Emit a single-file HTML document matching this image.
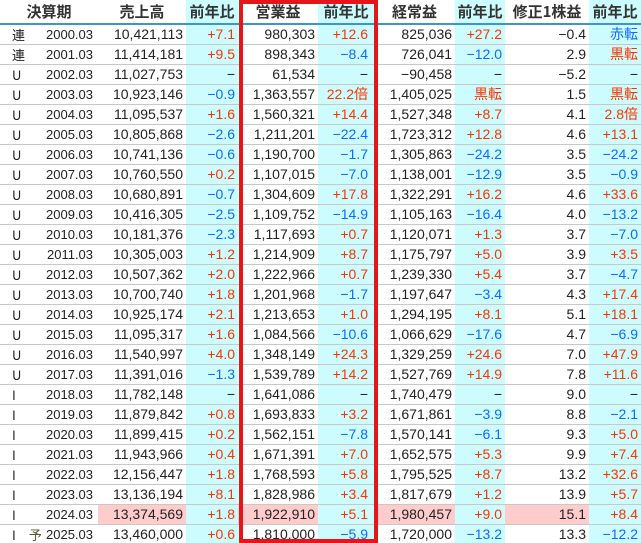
<!DOCTYPE html>
<html><head><meta charset="utf-8">
<style>
html,body{margin:0;padding:0;background:#fff;width:641px;height:543px;overflow:hidden;position:relative}
table{border-collapse:collapse;table-layout:fixed;width:641px;font-family:"Liberation Sans","Noto Sans CJK JP",sans-serif;font-size:14px;color:#222}
th{height:23px;border-bottom:2px solid #3c94d0;font-weight:bold;font-size:15px;color:#333;text-align:center;padding:0;font-family:"Noto Sans CJK JP","Liberation Sans",sans-serif}
td{height:19px;border-bottom:1px solid #c8c8c8;padding:0 3px 0 0;text-align:right;white-space:nowrap;line-height:19px}
td:nth-child(1){text-align:left;padding-left:12px;font-size:13px;font-family:"Noto Sans CJK JP",sans-serif}
td:nth-child(2){font-size:13px;padding-right:5px}
td:nth-child(4),td:nth-child(6),td:nth-child(8),td:nth-child(10),th.c{background:#ccfcfd}
td:nth-child(6){padding-right:6px}
.r{color:#ff3300}.b{color:#0a6cff}
.r,.b,.k{font-family:"Liberation Sans","Noto Sans CJK JP",sans-serif}
tr.h td.p{background:#ffcccc}
.box{position:absolute;left:239px;top:0;width:131px;height:535px;border:4px solid #e8141c}
.y{color:#553;margin-left:13px}
</style></head><body>
<table>
<colgroup><col style="width:40px"><col style="width:58px"><col style="width:88px"><col style="width:52px"><col style="width:80px"><col style="width:56px"><col style="width:81px"><col style="width:50px"><col style="width:84px"><col style="width:52px"></colgroup>
<tr><th colspan="2">決算期</th><th>売上高</th><th class="c">前年比</th><th>営業益</th><th class="c">前年比</th><th>経常益</th><th class="c">前年比</th><th>修正1株益</th><th class="c">前年比</th></tr>
<tr><td>連</td><td>2000.03</td><td>10,421,113</td><td class="r">+7.1</td><td>980,303</td><td class="r">+12.6</td><td>825,036</td><td class="r">+27.2</td><td>−0.4</td><td class="b">赤転</td></tr>
<tr><td>連</td><td>2001.03</td><td>11,414,181</td><td class="r">+9.5</td><td>898,343</td><td class="b">−8.4</td><td>726,041</td><td class="b">−12.0</td><td>2.9</td><td class="r">黒転</td></tr>
<tr><td>U</td><td>2002.03</td><td>11,027,753</td><td>−</td><td>61,534</td><td>−</td><td>−90,458</td><td>−</td><td>−5.2</td><td>−</td></tr>
<tr><td>U</td><td>2003.03</td><td>10,923,146</td><td class="b">−0.9</td><td>1,363,557</td><td class="r">22.2倍</td><td>1,405,025</td><td class="r">黒転</td><td>1.5</td><td class="r">黒転</td></tr>
<tr><td>U</td><td>2004.03</td><td>11,095,537</td><td class="r">+1.6</td><td>1,560,321</td><td class="r">+14.4</td><td>1,527,348</td><td class="r">+8.7</td><td>4.1</td><td class="r">2.8倍</td></tr>
<tr><td>U</td><td>2005.03</td><td>10,805,868</td><td class="b">−2.6</td><td>1,211,201</td><td class="b">−22.4</td><td>1,723,312</td><td class="r">+12.8</td><td>4.6</td><td class="r">+13.1</td></tr>
<tr><td>U</td><td>2006.03</td><td>10,741,136</td><td class="b">−0.6</td><td>1,190,700</td><td class="b">−1.7</td><td>1,305,863</td><td class="b">−24.2</td><td>3.5</td><td class="b">−24.2</td></tr>
<tr><td>U</td><td>2007.03</td><td>10,760,550</td><td class="r">+0.2</td><td>1,107,015</td><td class="b">−7.0</td><td>1,138,001</td><td class="b">−12.9</td><td>3.5</td><td class="b">−0.9</td></tr>
<tr><td>U</td><td>2008.03</td><td>10,680,891</td><td class="b">−0.7</td><td>1,304,609</td><td class="r">+17.8</td><td>1,322,291</td><td class="r">+16.2</td><td>4.6</td><td class="r">+33.6</td></tr>
<tr><td>U</td><td>2009.03</td><td>10,416,305</td><td class="b">−2.5</td><td>1,109,752</td><td class="b">−14.9</td><td>1,105,163</td><td class="b">−16.4</td><td>4.0</td><td class="b">−13.2</td></tr>
<tr><td>U</td><td>2010.03</td><td>10,181,376</td><td class="b">−2.3</td><td>1,117,693</td><td class="r">+0.7</td><td>1,120,071</td><td class="r">+1.3</td><td>3.7</td><td class="b">−7.0</td></tr>
<tr><td>U</td><td>2011.03</td><td>10,305,003</td><td class="r">+1.2</td><td>1,214,909</td><td class="r">+8.7</td><td>1,175,797</td><td class="r">+5.0</td><td>3.9</td><td class="r">+3.5</td></tr>
<tr><td>U</td><td>2012.03</td><td>10,507,362</td><td class="r">+2.0</td><td>1,222,966</td><td class="r">+0.7</td><td>1,239,330</td><td class="r">+5.4</td><td>3.7</td><td class="b">−4.7</td></tr>
<tr><td>U</td><td>2013.03</td><td>10,700,740</td><td class="r">+1.8</td><td>1,201,968</td><td class="b">−1.7</td><td>1,197,647</td><td class="b">−3.4</td><td>4.3</td><td class="r">+17.4</td></tr>
<tr><td>U</td><td>2014.03</td><td>10,925,174</td><td class="r">+2.1</td><td>1,213,653</td><td class="r">+1.0</td><td>1,294,195</td><td class="r">+8.1</td><td>5.1</td><td class="r">+18.1</td></tr>
<tr><td>U</td><td>2015.03</td><td>11,095,317</td><td class="r">+1.6</td><td>1,084,566</td><td class="b">−10.6</td><td>1,066,629</td><td class="b">−17.6</td><td>4.7</td><td class="b">−6.9</td></tr>
<tr><td>U</td><td>2016.03</td><td>11,540,997</td><td class="r">+4.0</td><td>1,348,149</td><td class="r">+24.3</td><td>1,329,259</td><td class="r">+24.6</td><td>7.0</td><td class="r">+47.9</td></tr>
<tr><td>U</td><td>2017.03</td><td>11,391,016</td><td class="b">−1.3</td><td>1,539,789</td><td class="r">+14.2</td><td>1,527,769</td><td class="r">+14.9</td><td>7.8</td><td class="r">+11.6</td></tr>
<tr><td>I</td><td>2018.03</td><td>11,782,148</td><td>−</td><td>1,641,086</td><td>−</td><td>1,740,479</td><td>−</td><td>9.0</td><td>−</td></tr>
<tr><td>I</td><td>2019.03</td><td>11,879,842</td><td class="r">+0.8</td><td>1,693,833</td><td class="r">+3.2</td><td>1,671,861</td><td class="b">−3.9</td><td>8.8</td><td class="b">−2.1</td></tr>
<tr><td>I</td><td>2020.03</td><td>11,899,415</td><td class="r">+0.2</td><td>1,562,151</td><td class="b">−7.8</td><td>1,570,141</td><td class="b">−6.1</td><td>9.3</td><td class="r">+5.0</td></tr>
<tr><td>I</td><td>2021.03</td><td>11,943,966</td><td class="r">+0.4</td><td>1,671,391</td><td class="r">+7.0</td><td>1,652,575</td><td class="r">+5.3</td><td>9.9</td><td class="r">+7.4</td></tr>
<tr><td>I</td><td>2022.03</td><td>12,156,447</td><td class="r">+1.8</td><td>1,768,593</td><td class="r">+5.8</td><td>1,795,525</td><td class="r">+8.7</td><td>13.2</td><td class="r">+32.6</td></tr>
<tr><td>I</td><td>2023.03</td><td>13,136,194</td><td class="r">+8.1</td><td>1,828,986</td><td class="r">+3.4</td><td>1,817,679</td><td class="r">+1.2</td><td>13.9</td><td class="r">+5.7</td></tr>
<tr class="h"><td>I</td><td>2024.03</td><td class="p">13,374,569</td><td class="r">+1.8</td><td class="p">1,922,910</td><td class="r">+5.1</td><td class="p">1,980,457</td><td class="r">+9.0</td><td class="p">15.1</td><td class="r">+8.4</td></tr>
<tr><td>I<span class="y">予</span></td><td>2025.03</td><td>13,460,000</td><td class="r">+0.6</td><td>1,810,000</td><td class="b">−5.9</td><td>1,720,000</td><td class="b">−13.2</td><td>13.3</td><td class="b">−12.2</td></tr>
</table>
<div class="box"></div>
</body></html>
